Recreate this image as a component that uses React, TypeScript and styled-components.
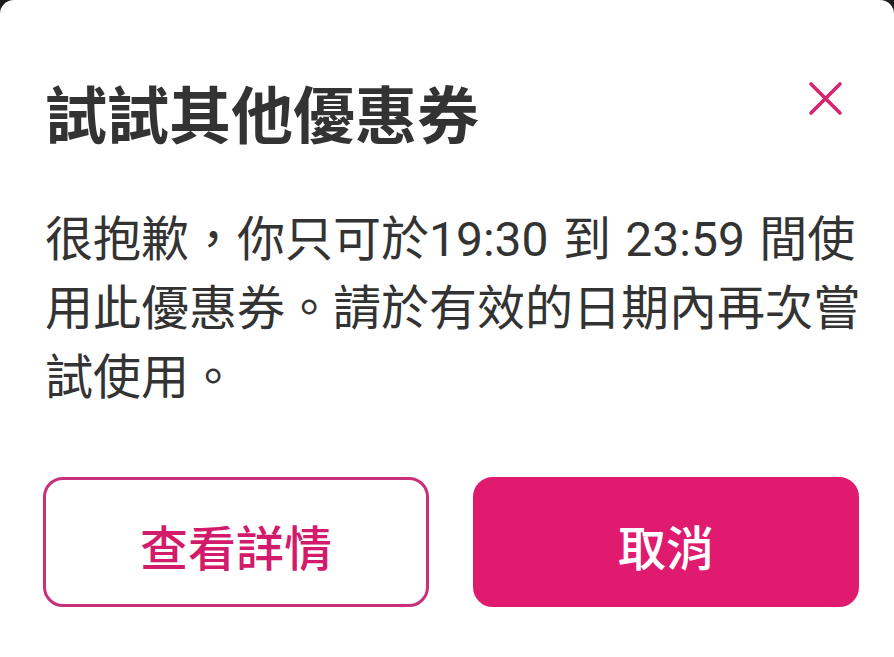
import React from 'react';
import styled, { createGlobalStyle } from 'styled-components';

const GlobalStyle = createGlobalStyle`
  html, body {
    margin: 0;
    padding: 0;
    background: #1c1c1c;
  }
  body {
    font-family: Roboto, "Noto Sans CJK TC", sans-serif;
  }
`;

const Sheet = styled.div`
  box-sizing: border-box;
  width: 894px;
  height: 657px;
  background: #ffffff;
  border-radius: 14px 14px 0 0;
  padding: 75px 51px 0 45px;
  display: flex;
  flex-direction: column;
  overflow: hidden;
`;

const Header = styled.div`
  display: flex;
  justify-content: space-between;
  align-items: flex-start;
`;

const Title = styled.h1`
  margin: 0;
  font-family: "Noto Sans CJK TC", sans-serif;
  font-size: 62px;
  line-height: 74px;
  font-weight: 700;
  color: #333333;
`;

const CloseButton = styled.button`
  margin-top: 6px;
  width: 35px;
  height: 35px;
  padding: 0;
  border: none;
  background: transparent;
  cursor: pointer;
  display: flex;
`;

const Message = styled.p`
  margin: 56px 0 0;
  font-family: Roboto, "Noto Sans CJK TC", sans-serif;
  font-size: 48px;
  line-height: 69px;
  font-weight: 400;
  word-spacing: 2.5px;
  color: #333333;
  white-space: nowrap;
`;

const Actions = styled.div`
  margin-top: 65px;
  margin-left: -2px;
  margin-right: -16px;
  display: grid;
  grid-template-columns: 1fr 1fr;
  gap: 44px;
`;

const ActionButton = styled.button<{ $primary?: boolean }>`
  box-sizing: border-box;
  height: 130px;
  border-radius: 20px;
  border: 3px solid ${p => (p.$primary ? '#e01a6e' : '#c8307a')};
  background: ${p => (p.$primary ? '#e01a6e' : '#ffffff')};
  color: ${p => (p.$primary ? '#ffffff' : '#d31b6c')};
  font-family: "Noto Sans CJK TC", sans-serif;
  font-size: 48px;
  font-weight: 500;
  cursor: pointer;
  padding: 6px 0 0;
`;

const App: React.FC = () => {
  return (
    <>
      <GlobalStyle />
      <Sheet>
        <Header>
          <Title>試試其他優惠券</Title>
          <CloseButton aria-label="關閉">
            <svg width="35" height="35" viewBox="0 0 35 35">
              <path
                d="M3 3 L32 32 M32 3 L3 32"
                stroke="#d8246e"
                strokeWidth="3.6"
                strokeLinecap="round"
                fill="none"
              />
            </svg>
          </CloseButton>
        </Header>
        <Message>
          很抱歉，你只可於19:30 到 23:59 間使
          <br />
          用此優惠券。請於有效的日期內再次嘗
          <br />
          試使用。
        </Message>
        <Actions>
          <ActionButton>查看詳情</ActionButton>
          <ActionButton $primary>取消</ActionButton>
        </Actions>
      </Sheet>
    </>
  );
};

export default App;
